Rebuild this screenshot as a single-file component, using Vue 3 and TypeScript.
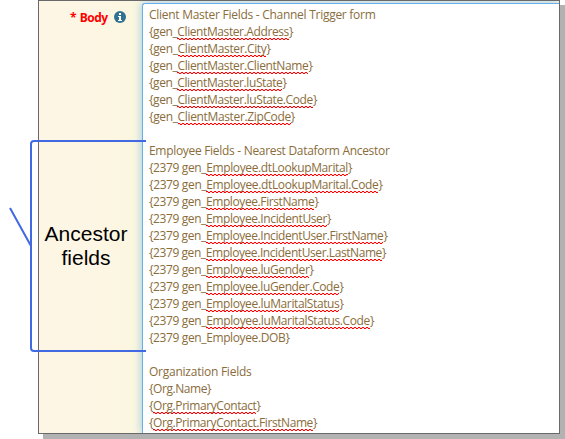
<script setup lang="ts">
import { onMounted, ref } from 'vue'

interface Line { plain: string; flagged?: string; tail?: string; width: number }

const row = (plain: string, flagged: string, width: number): Line => ({ plain, flagged, tail: '}', width })

const lines: Line[] = [
  { plain: 'Client Master Fields - Channel Trigger form', width: 226.5 },
  row('{gen_', 'ClientMaster.Address', 144),
  row('{gen_', 'ClientMaster.City', 121.5),
  row('{gen_', 'ClientMaster.ClientName', 163.5),
  row('{gen_', 'ClientMaster.luState', 137.5),
  row('{gen_', 'ClientMaster.luState.Code', 168),
  row('{gen_', 'ClientMaster.ZipCode', 146),
  { plain: '', width: 0 },
  { plain: 'Employee Fields - Nearest Dataform Ancestor', width: 240.5 },
  row('{2379 gen_', 'Employee.dtLookupMarital', 203),
  row('{2379 gen_', 'Employee.dtLookupMarital.Code', 233.5),
  row('{2379 gen_', 'Employee.FirstName', 169.5),
  row('{2379 gen_', 'Employee.IncidentUser', 182),
  row('{2379 gen_', 'Employee.IncidentUser.FirstName', 238.5),
  row('{2379 gen_', 'Employee.IncidentUser.LastName', 237),
  row('{2379 gen_', 'Employee.luGender', 164.5),
  row('{2379 gen_', 'Employee.luGender.Code', 194.5),
  row('{2379 gen_', 'Employee.luMaritalStatus', 194.5),
  row('{2379 gen_', 'Employee.luMaritalStatus.Code', 225),
  { plain: '{2379 gen_Employee.DOB}', width: 140.5 },
  { plain: '', width: 0 },
  { plain: 'Organization Fields', width: 102.5 },
  { plain: '{Org.Name}', width: 62 },
  row('{', 'Org.PrimaryContact', 111.5),
  row('{', 'Org.PrimaryContact.FirstName', 168),
]

const editor = ref<HTMLElement | null>(null)
const spacing = ref<number[]>(lines.map(() => 0))

// Tighten each line's tracking to its set width.
onMounted(() => {
  const rows = editor.value?.querySelectorAll<HTMLElement>('.text')
  if (!rows) return
  spacing.value = Array.from(rows, (el, i) => {
    const count = el.textContent?.length ?? 0
    return count ? (lines[i].width - el.getBoundingClientRect().width) / count : 0
  })
})
</script>

<template>
  <main class="page">
    <section class="panel">
      <div class="label-column">
        <span class="label">* Body</span>
        <svg class="info" viewBox="0 0 12 12"><circle cx="6" cy="6" r="6" /><path d="M5 2h2v2H5zM4 5h3v4h1v1H4V9h1V6H4z" /></svg>
      </div>
      <div ref="editor" class="editor">
        <div v-for="(line, i) in lines" :key="i" class="line"><span class="text" :style="{ letterSpacing: spacing[i] + 'px' }"><span>{{ line.plain }}</span><span v-if="line.flagged" class="flagged">{{ line.flagged }}</span><span v-if="line.tail">{{ line.tail }}</span></span></div>
      </div>
    </section>
    <svg class="bracket" viewBox="0 0 150 439"><path d="M146 141H34Q31 141 31 144V348Q31 351 34 351H146M10 208L31 246" /></svg>
    <div class="callout">Ancestor<br />fields</div>
  </main>
</template>

<style>
body { background: #fff; overflow: hidden; }
</style>

<style scoped>
.page { position: relative; width: 565px; height: 439px; overflow: hidden; box-sizing: border-box; padding-left: 38px; }
.panel { display: flex; box-sizing: border-box; width: 522px; height: 434px; border: 1px solid #69696b; box-shadow: 5px 5px 0 #b2b2b2; background: #fdf6e3; }
.label-column { display: flex; align-items: flex-start; box-sizing: border-box; width: 103px; padding: 8px 0 0 31px; background: linear-gradient(90deg, #fef6e4 50%, #faf6df); font: bold 12px/17px "Open Sans", sans-serif; letter-spacing: -0.5px; word-spacing: 1px; color: #f00; }
.label { width: 44px; white-space: nowrap; }
.info { width: 12px; height: 12px; margin-top: 2px; fill: #31708f; }
.info path { fill: #fff; }
.editor { flex: 1; box-sizing: border-box; margin-top: 2px; padding: 2px 0 0 6px; border: 1px solid #66afe9; border-width: 1px 0 0 1px; border-radius: 3px 0 0 0; box-shadow: 0 0 8px rgba(82, 168, 236, 0.6); clip-path: inset(-2px 0 0 -14px); background: #fff; color: #8a6d3b; font: 12px/17px "Open Sans", sans-serif; overflow: hidden; }
.line { height: 17px; white-space: pre; }
.flagged {
  background:
    repeating-linear-gradient(90deg, #f00 0 2px, rgba(255, 0, 0, 0.15) 2px 4px) 0 calc(100% - 1px) / 100% 1px no-repeat,
    repeating-linear-gradient(90deg, rgba(255, 0, 0, 0.15) 0 2px, #f00 2px 4px) 0 100% / 100% 1px no-repeat;
}
.bracket { position: absolute; left: 0; top: 0; width: 150px; height: 439px; fill: none; stroke: #4169e1; stroke-width: 2; }
.callout { position: absolute; left: 36px; top: 222px; width: 100px; text-align: center; font: 21px/24px "Liberation Sans", Arial, sans-serif; color: #000; }
</style>
